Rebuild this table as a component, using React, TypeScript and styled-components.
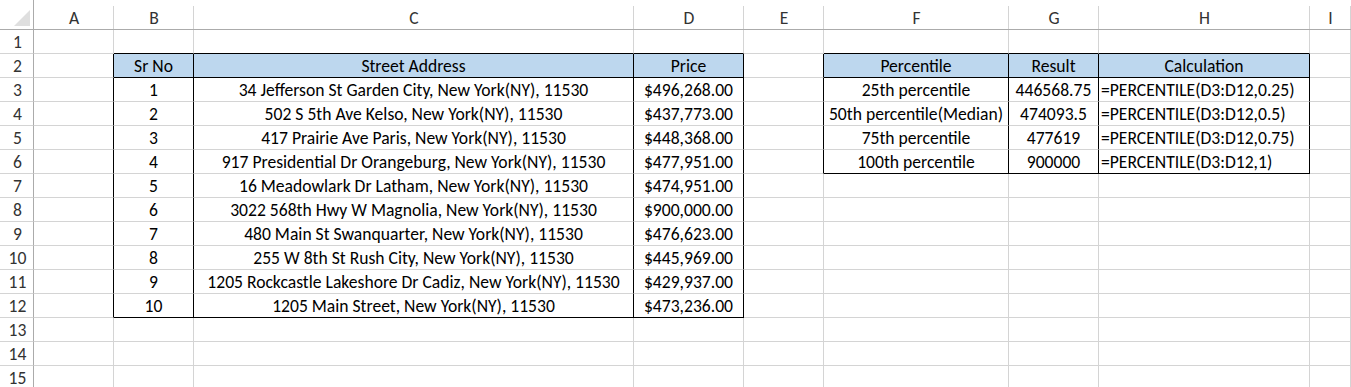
import styled, { createGlobalStyle } from "styled-components";

const GlobalStyle = createGlobalStyle`
  html, body {
    margin: 0;
    padding: 0;
    background: #ffffff;
  }
  body {
    font-family: Carlito, Lato, "Liberation Sans", sans-serif;
  }
`;

const COLS = ["A", "B", "C", "D", "E", "F", "G", "H", "I"];
const ROW_COUNT = 15;

const Sheet = styled.div`
  display: grid;
  grid-template-columns: 34px 80px 80px 440px 110px 80px 185px 90px 211px 1fr;
  grid-template-rows: 30px repeat(${ROW_COUNT}, 24px);
  width: 1351px;
  height: 387px;
  overflow: hidden;
  background: #ffffff;
`;

const Corner = styled.div`
  position: relative;
  box-sizing: border-box;
  border-bottom: 1px solid #ababab;
  border-right: 1px solid #ababab;

  &::after {
    content: "";
    position: absolute;
    right: 3px;
    bottom: 3px;
    width: 0;
    height: 0;
    border-left: 16px solid transparent;
    border-bottom: 16px solid #dfdfdf;
  }
`;

const ColHead = styled.div`
  position: relative;
  box-sizing: border-box;
  display: flex;
  align-items: center;
  justify-content: center;
  padding-top: 6px;
  border-bottom: 1px solid #ababab;
  color: #333333;
  font-size: 17.6px;

  &::after {
    content: "";
    position: absolute;
    right: 0;
    top: 6px;
    bottom: 0;
    width: 1px;
    background: #d4d4d4;
  }
`;

const RowHead = styled.div`
  box-sizing: border-box;
  display: flex;
  align-items: center;
  justify-content: center;
  border-right: 1px solid #ababab;
  border-bottom: 1px solid #d4d4d4;
  color: #333333;
  font-size: 17.6px;
  padding-left: 2px;
`;

const Cell = styled.div<{
  $align?: "left" | "center";
  $fill?: boolean;
  $br?: boolean;
  $bb?: boolean;
}>`
  box-sizing: border-box;
  display: flex;
  align-items: center;
  justify-content: ${(p) => (p.$align === "left" ? "flex-start" : "center")};
  padding: 1px 2px 0 2px;
  white-space: nowrap;
  overflow: visible;
  font-size: 17.6px;
  color: #000000;
  background: ${(p) => (p.$fill ? "#bdd7ee" : "transparent")};
  border-right: 1px solid ${(p) => (p.$br ? "#000000" : "#d4d4d4")};
  border-bottom: 1px solid ${(p) => (p.$bb ? "#000000" : "#d4d4d4")};
`;

type CellData = { text: string; align?: "left" | "center" };

const table1 = [
  ["Sr No", "Street Address", "Price"],
  ["1", "34 Jefferson St Garden City, New York(NY), 11530", "$496,268.00"],
  ["2", "502 S 5th Ave Kelso, New York(NY), 11530", "$437,773.00"],
  ["3", "417 Prairie Ave Paris, New York(NY), 11530", "$448,368.00"],
  ["4", "917 Presidential Dr Orangeburg, New York(NY), 11530", "$477,951.00"],
  ["5", "16 Meadowlark Dr Latham, New York(NY), 11530", "$474,951.00"],
  ["6", "3022 568th Hwy W Magnolia, New York(NY), 11530", "$900,000.00"],
  ["7", "480 Main St Swanquarter, New York(NY), 11530", "$476,623.00"],
  ["8", "255 W 8th St Rush City, New York(NY), 11530", "$445,969.00"],
  ["9", "1205 Rockcastle Lakeshore Dr Cadiz, New York(NY), 11530", "$429,937.00"],
  ["10", "1205 Main Street, New York(NY), 11530", "$473,236.00"],
];

const table2 = [
  ["Percentile", "Result", "Calculation"],
  ["25th percentile", "446568.75", "=PERCENTILE(D3:D12,0.25)"],
  ["50th percentile(Median)", "474093.5", "=PERCENTILE(D3:D12,0.5)"],
  ["75th percentile", "477619", "=PERCENTILE(D3:D12,0.75)"],
  ["100th percentile", "900000", "=PERCENTILE(D3:D12,1)"],
];

// column index: A=0 ... I=8; row index: 1-based sheet rows
const T1 = { col: 1, row: 2, width: 3, height: table1.length };
const T2 = { col: 5, row: 2, width: 3, height: table2.length };

const inTable = (t: typeof T1, c: number, r: number) =>
  c >= t.col && c < t.col + t.width && r >= t.row && r < t.row + t.height;

const cellAt = (c: number, r: number): CellData | null => {
  if (inTable(T1, c, r)) {
    return { text: table1[r - T1.row][c - T1.col] };
  }
  if (inTable(T2, c, r)) {
    const text = table2[r - T2.row][c - T2.col];
    const isCalc = c - T2.col === 2 && r > T2.row;
    return { text, align: isCalc ? "left" : "center" };
  }
  return null;
};

const borderFlags = (c: number, r: number) => {
  let br = false;
  let bb = false;
  for (const t of [T1, T2]) {
    const inside = inTable(t, c, r);
    // vertical lines inside and around tables are black
    if (inside || inTable(t, c + 1, r)) br = true;
    // top edge, header bottom and bottom edge
    if (inTable(t, c, r + 1) && r + 1 === t.row) bb = true;
    if (inside && (r === t.row || r === t.row + t.height - 1)) bb = true;
  }
  return { br, bb };
};

const isHeader = (c: number, r: number) =>
  (inTable(T1, c, r) && r === T1.row) || (inTable(T2, c, r) && r === T2.row);

const App = () => {
  const rows = Array.from({ length: ROW_COUNT }, (_, i) => i + 1);
  return (
    <>
      <GlobalStyle />
      <Sheet>
        <Corner />
        {COLS.map((c) => (
          <ColHead key={c}>{c}</ColHead>
        ))}
        {rows.map((r) => (
          <>
            <RowHead key={`r${r}`}>{r}</RowHead>
            {COLS.map((_, c) => {
              const data = cellAt(c, r);
              const { br, bb } = borderFlags(c, r);
              return (
                <Cell
                  key={`${r}-${c}`}
                  $align={data?.align}
                  $fill={isHeader(c, r)}
                  $br={br}
                  $bb={bb}
                >
                  {data?.text}
                </Cell>
              );
            })}
          </>
        ))}
      </Sheet>
    </>
  );
};

export default App;
